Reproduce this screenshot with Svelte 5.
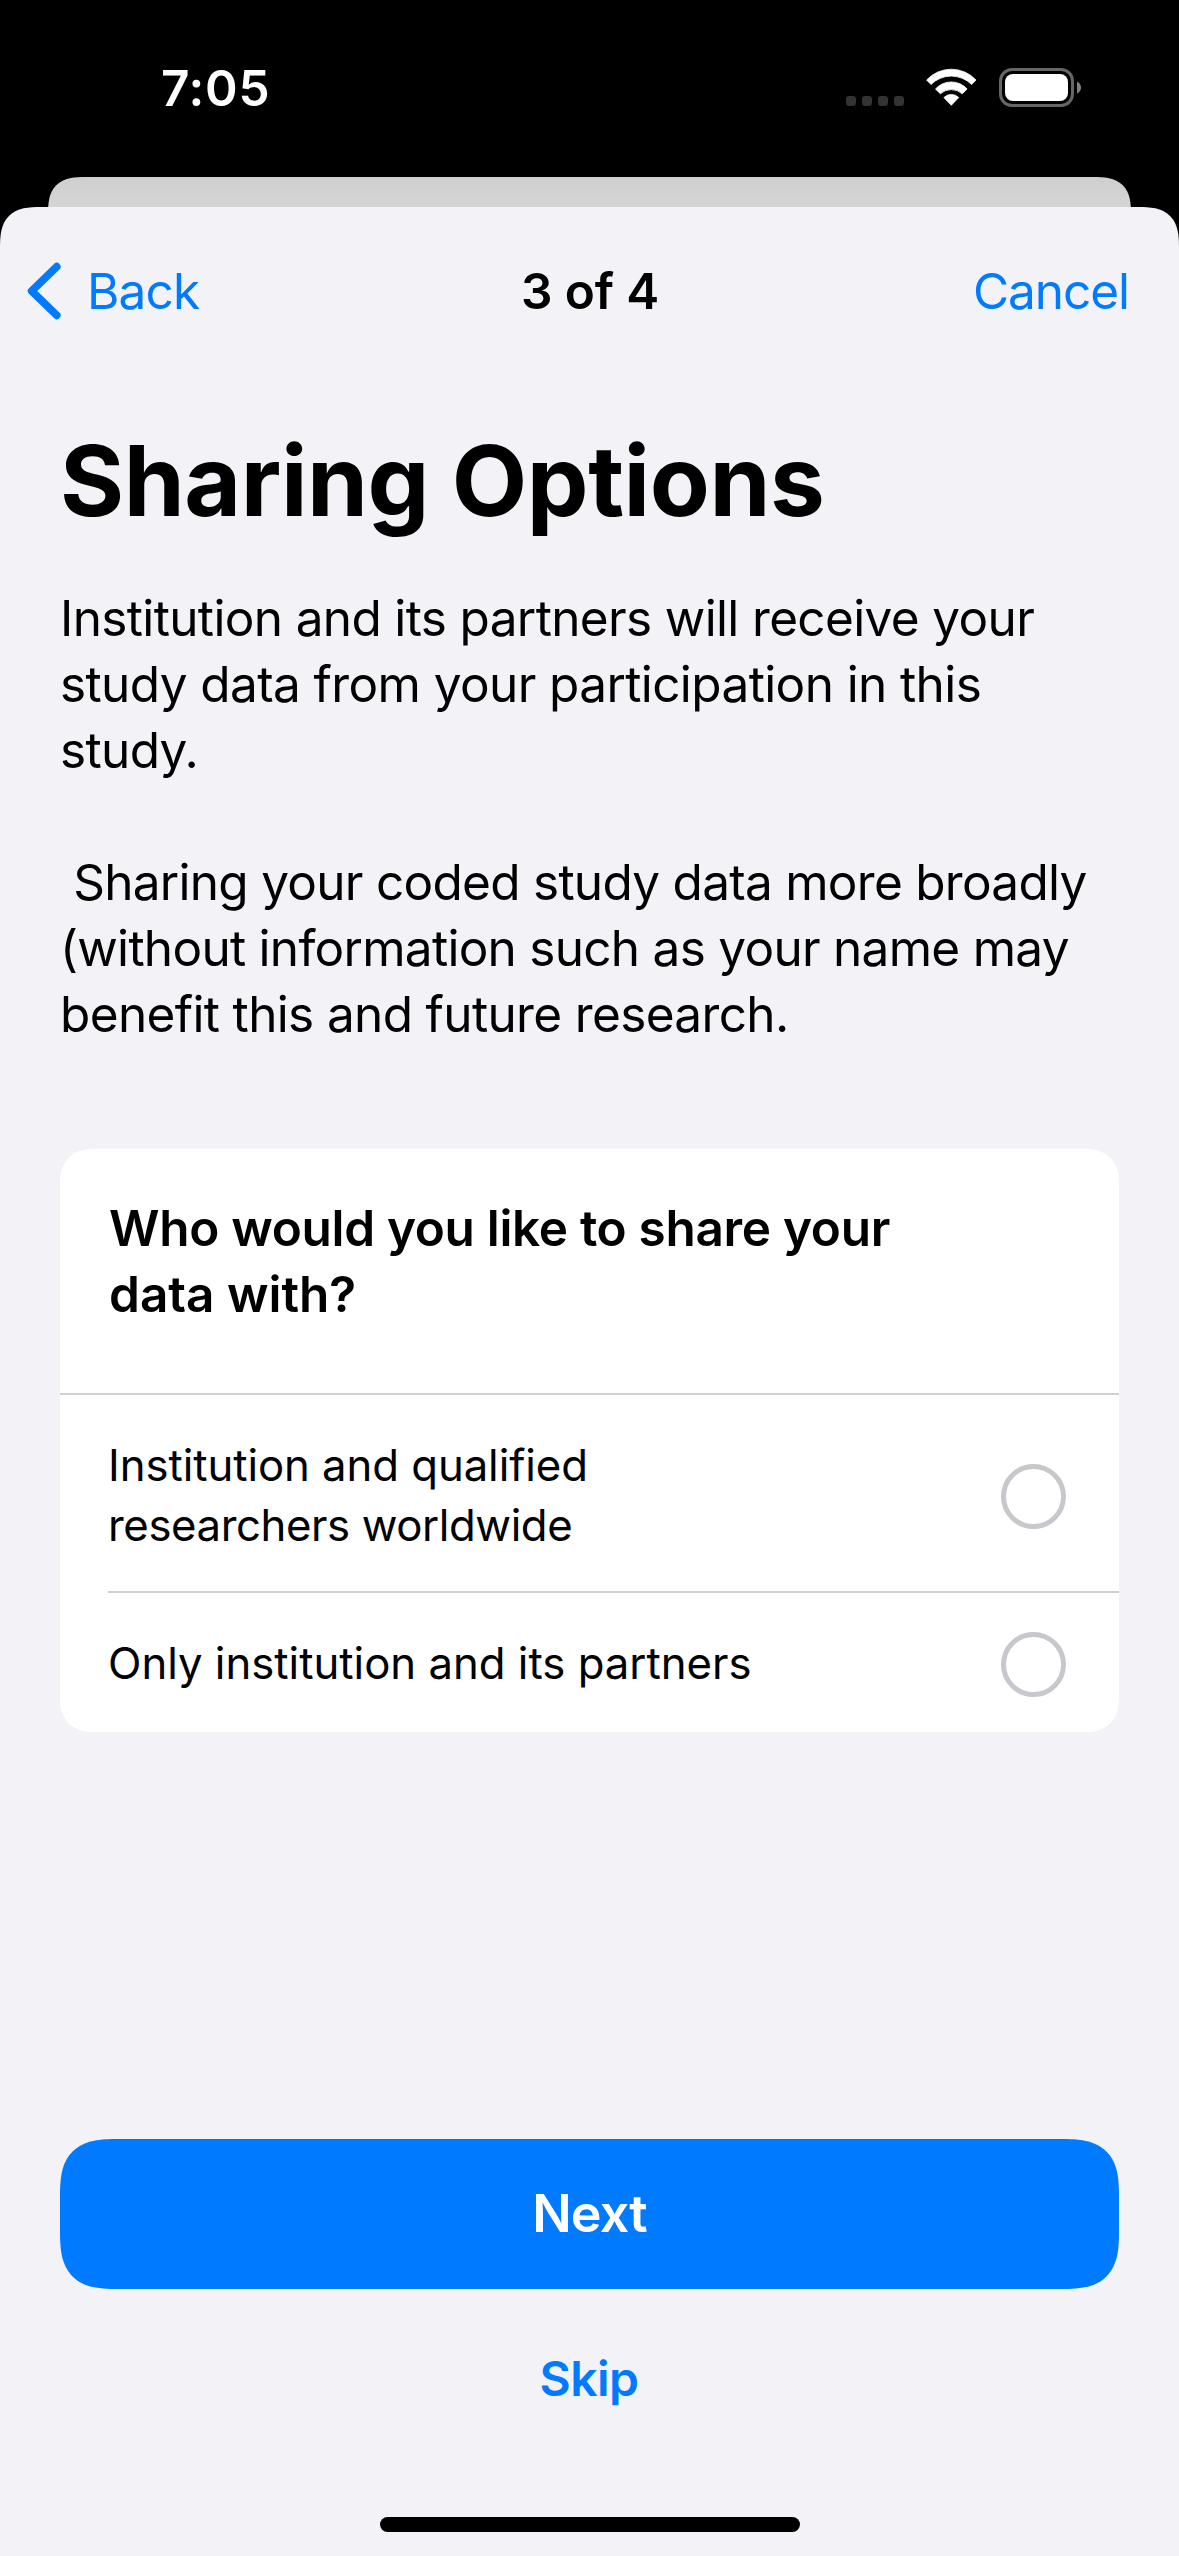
<script>
  const total = 4;
  const step = 3;
  const intro = [
    'Institution and its partners will receive your',
    'study data from your participation in this',
    'study.',
    '',
    ' Sharing your coded study data more broadly',
    '(without information such as your name may',
    'benefit this and future research.',
  ];
  const question = ['Who would you like to share your', 'data with?'];
  const options = [
    { id: 'worldwide', lines: ['Institution and qualified', 'researchers worldwide'] },
    { id: 'partners', lines: ['Only institution and its partners'] },
  ];
</script>

<div class="phone">
  <header class="status">
    <span class="time">7:05</span>
    <div class="indicators">
      <div class="signal">
        {#each Array(4) as _}<i></i>{/each}
      </div>
      <svg class="wifi" width="51" height="37" viewBox="0 0 51 37" fill="#fff" stroke="#fff" stroke-width="0.8" stroke-linejoin="round">
        <path d="M.6 11A33.7 33.7 0 0 1 50 11L45.6 15.5A28.7 28.7 0 0 0 5 15.5Z" />
        <path d="M9.5 20A21.2 21.2 0 0 1 41.1 20L36.2 24.8A16.2 16.2 0 0 0 14.4 24.8Z" />
        <path d="M17.9 28.6A10.2 10.2 0 0 1 32.7 28.6L25.3 36.3Z" />
      </svg>
      <svg class="battery" width="83" height="39" viewBox="0 0 83 39">
        <rect x="1.5" y="1.5" width="72" height="36" rx="11.5" fill="none" stroke="#666" stroke-width="3" />
        <rect x="6" y="6" width="63" height="27" rx="8" fill="#fff" />
        <path d="M78 13.5Q82 15.5 82 19.5T78 25.5Z" fill="#808080" />
      </svg>
    </div>
  </header>

  <div class="behind"></div>

  <main class="sheet">
    <nav>
      <button class="back">
        <svg width="34" height="58" viewBox="0 0 34 58" fill="none" stroke="#007aff" stroke-width="7.8" stroke-linecap="round" stroke-linejoin="round">
          <path d="M29.7 4.7L4.7 29L29.7 53.3" />
        </svg>
        <span>Back</span>
      </button>
      <strong>{step} of {total}</strong>
      <button class="cancel">Cancel</button>
    </nav>

    <section class="content">
      <h1>Sharing Options</h1>
      <p class="intro">
        {#each intro as line}<span>{line}</span>{/each}
      </p>

      <div class="card">
        <h2>
          {#each question as line}<span>{line}</span>{/each}
        </h2>
        {#each options as option (option.id)}
          <div class="option {option.id}">
            <div class="label">
              {#each option.lines as line}<span>{line}</span>{/each}
            </div>
            <span class="radio"></span>
          </div>
        {/each}
      </div>
    </section>

    <footer>
      <button class="next">Next</button>
      <button class="skip">Skip</button>
      <div class="home"></div>
    </footer>
  </main>
</div>

<style>
  :global(body) {
    margin: 0;
    background: #000;
  }
  .phone {
    width: 1179px;
    height: 2556px;
    display: flex;
    flex-direction: column;
    background: #000;
    color: #000;
    font: 400 49.5px/66px Inter, 'Liberation Sans', sans-serif;
    overflow: hidden;
  }
  button {
    padding: 0;
    border: 0;
    background: none;
    font: inherit;
    color: #007aff;
  }

  .status {
    box-sizing: border-box;
    height: 177px;
    padding: 58px 97px 0 161px;
    display: flex;
    justify-content: space-between;
    align-items: flex-start;
    color: #fff;
  }
  .time {
    font-weight: 600;
    line-height: 60px;
    letter-spacing: 0.7px;
  }
  .indicators {
    display: flex;
    align-items: flex-end;
    margin-top: 10px;
  }
  .signal {
    display: flex;
    gap: 6px;
    margin: 0 22px 1px 0;
  }
  .signal i {
    width: 10px;
    height: 10px;
    border-radius: 3px;
    background: #333;
  }
  .wifi {
    margin: 0 22px 1px 0;
  }
  svg {
    display: block;
    overflow: visible;
  }

  /* The parent sheet peeks out above the current one, which overlaps it. */
  .behind {
    height: 70px;
    margin: 0 48px -40px;
    border-radius: 38px 38px 0 0;
    corner-shape: superellipse(1.5);
    background: linear-gradient(#cfcfcf, #d5d5d5 30px);
  }
  .sheet {
    flex: 1;
    display: flex;
    flex-direction: column;
    background: #f2f2f7;
    border-radius: 41px 41px 0 0;
    corner-shape: superellipse(1.5);
    position: relative;
  }

  nav {
    display: grid;
    grid-template-columns: 1fr auto 1fr;
    align-items: center;
    padding: 54px 50px 0 51px;
    line-height: 60px;
  }
  nav strong {
    font-weight: 600;
    letter-spacing: -0.1px;
  }
  .back {
    display: flex;
    align-items: center;
    gap: 26px;
    height: 60px;
    margin-left: -24px;
    letter-spacing: -0.8px;
  }
  .cancel {
    justify-self: end;
    letter-spacing: -1.05px;
  }

  .content {
    padding: 100px 60px 0;
  }
  h1 {
    margin: 0;
    font-size: 98px;
    line-height: 120px;
    font-weight: 700;
    letter-spacing: -0.45px;
  }
  .intro {
    margin: 44px 0 0;
  }
  .intro span,
  h2 span,
  .label span {
    display: block;
    white-space: pre;
  }
  .intro span {
    min-height: 66px;
    letter-spacing: -0.64px;
  }
  .intro span:nth-child(2) {
    letter-spacing: -0.6px;
  }
  .intro span:nth-child(5),
  .intro span:nth-child(6) {
    letter-spacing: -0.72px;
  }

  .card {
    margin-top: 102px;
    height: 583px;
    border-radius: 30px;
    background: #fff;
  }
  h2 {
    margin: 0;
    padding: 46px 48px 66px 49px;
    font-size: 49.5px;
    line-height: 66px;
    font-weight: 600;
    border-bottom: 2px solid #d0d0d2;
  }
  h2 span:first-child {
    letter-spacing: -0.31px;
  }
  .option {
    box-sizing: border-box;
    display: flex;
    justify-content: space-between;
    align-items: center;
    margin-left: 48px;
    padding-right: 53px;
    font-size: 43.7px;
    line-height: 60px;
  }
  .worldwide {
    height: 198px;
    padding-top: 6px;
    border-bottom: 2px solid #d0d0d2;
  }
  .worldwide span:nth-child(1) {
    letter-spacing: -0.06px;
  }
  .worldwide .label span:nth-child(2) {
    letter-spacing: -0.4px;
  }
  .partners {
    height: 139px;
    padding-top: 3px;
  }
  .radio {
    box-sizing: border-box;
    width: 65px;
    height: 65px;
    margin-top: 1px;
    border: 5px solid #c7c7cc;
    border-radius: 50%;
  }

  footer {
    margin-top: auto;
    padding: 0 60px 24px;
    display: flex;
    flex-direction: column;
    align-items: center;
  }
  .next {
    width: 100%;
    height: 150px;
    border-radius: 58px;
    corner-shape: superellipse(1.5);
    background: #007aff;
    color: #fff;
    font-size: 52px;
    font-weight: 600;
    letter-spacing: -0.85px;
  }
  .skip {
    margin: 60px 1px 0 0;
    height: 60px;
    font-size: 48px;
    line-height: 60px;
    font-weight: 600;
    letter-spacing: -0.5px;
  }
  .home {
    width: 420px;
    height: 15px;
    margin-top: 108px;
    border-radius: 7.5px;
    background: #000;
  }
</style>
